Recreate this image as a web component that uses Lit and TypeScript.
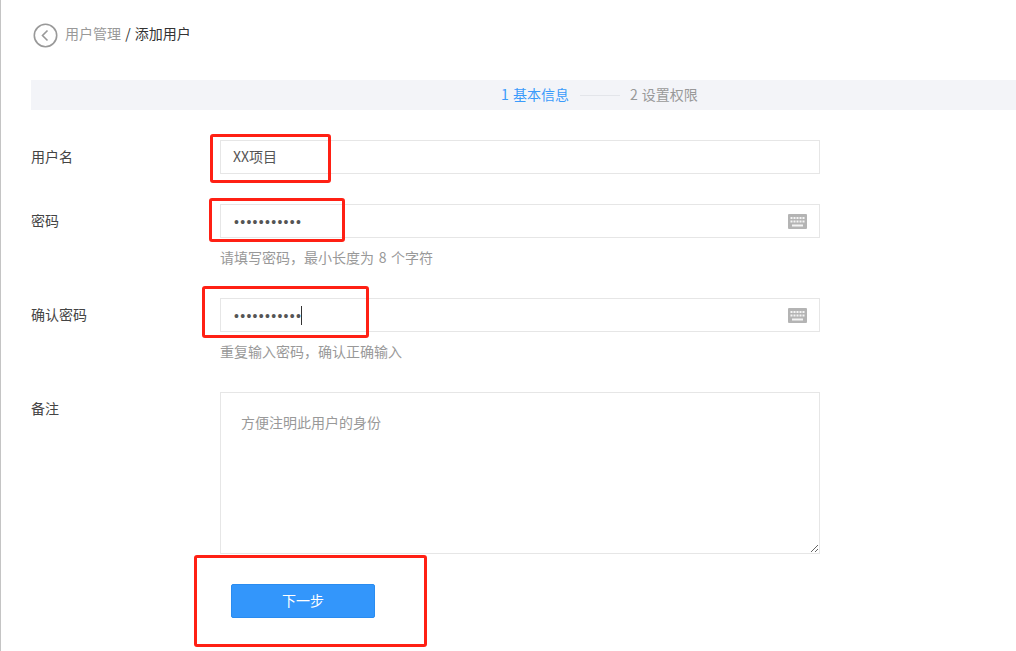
import { LitElement, html, css, svg } from "lit";
import { customElement } from "lit/decorators.js";

const keyboard = html`<svg class="kbd" width="19" height="15" viewBox="0 0 19 15" aria-hidden="true">
  <rect width="19" height="15" rx="1" fill="#b4b4b4"></rect>
  ${[0, 1, 2, 3, 4].map((i) => svg`<rect x="${2.5 + i * 3}" y="3" width="2" height="2" fill="#f4f4f4"></rect>`)}
  ${[0, 1, 2, 3, 4].map((i) => svg`<rect x="${2.5 + i * 3}" y="6.5" width="2" height="2" fill="#f4f4f4"></rect>`)}
  <rect x="4" y="10.5" width="11" height="2" fill="#f4f4f4"></rect>
</svg>`;

@customElement("app-root")
export class AppRoot extends LitElement {
  static styles = css`
    :host {
      display: block;
      position: relative;
      width: 1016px;
      height: 651px;
      overflow: hidden;
      background: #fff;
      box-sizing: border-box;
      border-left: 1px solid #c4c4c4;
      padding-left: 30px;
      font-family: "Noto Sans CJK SC", "Noto Sans", sans-serif;
      font-size: 14px;
      color: #444;
    }
    .crumb {
      display: flex;
      align-items: center;
      gap: 7px;
      padding: 23px 0 0 2px;
      height: 24px;
      margin-bottom: 33px;
      line-height: 22px;
    }
    .crumb-text {
      color: #333;
      margin-top: -5px;
      word-spacing: 1px;
    }
    .crumb-text span {
      color: #999;
    }
    .steps {
      display: flex;
      align-items: center;
      box-sizing: border-box;
      height: 30px;
      padding: 0 0 2px 470px;
      background: #f3f4f8;
      color: #999;
      margin-bottom: 30px;
      word-spacing: 1px;
    }
    .steps .on {
      color: #3a9bfb;
    }
    .steps i {
      width: 40px;
      height: 1px;
      margin: 2px 10px 0 11px;
      background: #e3e5ea;
    }
    .row {
      display: grid;
      grid-template-columns: 189px 600px;
      margin-bottom: 30px;
    }
    .label {
      height: 34px;
      line-height: 32px;
      color: #444;
    }
    .field {
      position: relative;
      height: 34px;
    }
    input,
    textarea {
      display: block;
      box-sizing: border-box;
      width: 100%;
      border: 1px solid #e6e6e6;
      background: #fff;
      color: #555;
      outline: none;
      margin: 0;
      font-family: inherit;
      font-size: 14px;
    }
    input {
      height: 34px;
      padding: 0 46px 2px 12px;
    }
    input[type="password"] {
      padding: 1px 46px 0 13px;
      letter-spacing: 1.3px;
      font-family: "Liberation Sans", sans-serif;
      font-size: 14px;
    }
    textarea {
      height: 162px;
      padding: 18px 20px;
      line-height: 22px;
    }
    textarea::placeholder {
      color: #999;
      opacity: 1;
    }
    .kbd {
      position: absolute;
      right: 13px;
      top: 10px;
    }
    .caret {
      position: absolute;
      left: 81px;
      top: 8px;
      width: 1px;
      height: 19px;
      background: #333;
    }
    .hint {
      margin-top: 9px;
      padding-bottom: 1px;
      line-height: 20px;
      color: #999;
      word-spacing: 1.5px;
    }
    .actions {
      padding-left: 200px;
    }
    button {
      display: block;
      box-sizing: border-box;
      width: 144px;
      height: 34px;
      border: 1px solid #2a8cf0;
      border-radius: 2px;
      background: #3396fb;
      color: #fff;
      font-family: inherit;
      font-size: 14px;
      padding: 0 0 2px;
    }
    .mark {
      position: absolute;
      box-sizing: border-box;
      border: 3px solid #ff2014;
      border-radius: 3px;
      pointer-events: none;
    }
    .m1 { left: 209px; top: 134px; width: 121px; height: 49px; }
    .m2 { left: 208px; top: 198px; width: 136px; height: 44px; }
    .m3 { left: 201px; top: 286px; width: 167px; height: 52px; }
    .m4 { left: 193px; top: 555px; width: 233px; height: 92px; }
  `;

  render() {
    return html`
      <div class="crumb">
        <svg width="25" height="25" viewBox="0 0 25 25" aria-hidden="true">
          <circle cx="12.5" cy="12.5" r="11.2" fill="none" stroke="#999" stroke-width="1.6"></circle>
          <path d="M14.5 7.5 9.5 12.5l5 5" fill="none" stroke="#999" stroke-width="1.6"></path>
        </svg>
        <div class="crumb-text"><span>用户管理</span> / 添加用户</div>
      </div>
      <div class="steps">
        <span class="on">1 基本信息</span><i></i><span>2 设置权限</span>
      </div>
      <div class="row">
        <div class="label">用户名</div>
        <div class="field"><input type="text" .value=${"XX项目"} /></div>
      </div>
      <div class="row">
        <div class="label">密码</div>
        <div>
          <div class="field"><input type="password" .value=${"12345678901"} />${keyboard}</div>
          <div class="hint">请填写密码，最小长度为 8 个字符</div>
        </div>
      </div>
      <div class="row">
        <div class="label">确认密码</div>
        <div>
          <div class="field">
            <input type="password" .value=${"12345678901"} />${keyboard}
            <div class="caret"></div>
          </div>
          <div class="hint">重复输入密码，确认正确输入</div>
        </div>
      </div>
      <div class="row">
        <div class="label">备注</div>
        <textarea placeholder="方便注明此用户的身份"></textarea>
      </div>
      <div class="actions"><button>下一步</button></div>
      <div class="mark m1"></div>
      <div class="mark m2"></div>
      <div class="mark m3"></div>
      <div class="mark m4"></div>
    `;
  }
}
